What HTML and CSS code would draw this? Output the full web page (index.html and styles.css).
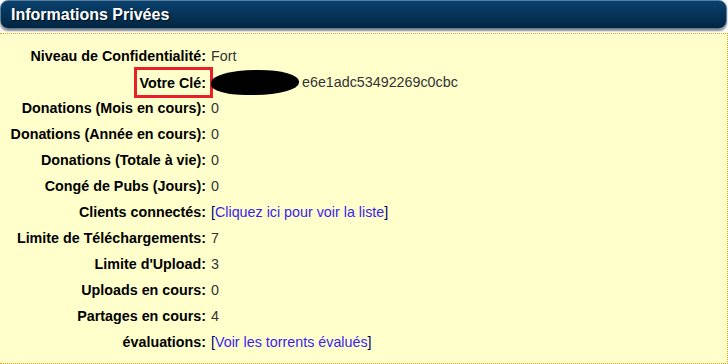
FILE: index.html
```html
<!DOCTYPE html>
<html lang="fr">

<head>
    <meta charset="UTF-8">
    <meta name="viewport" content="width=device-width, initial-scale=1.0">
    <title>Informations Privées</title>
    <link rel="stylesheet" href="styles.css">
</head>

<body>
    <div class="head">
        <h2>Informations Privées</h2>
    </div>
    <div class="panel">
        <div class="info">
            <span class="lbl">Niveau de Confidentialité:</span>
            <span class="val">Fort</span>

            <span class="lbl"><span class="mark">Votre Clé:</span></span>
            <span class="val key"><span class="blot"></span>e6e1adc53492269c0cbc</span>

            <span class="lbl">Donations (Mois en cours):</span>
            <span class="val">0</span>

            <span class="lbl">Donations (Année en cours):</span>
            <span class="val">0</span>

            <span class="lbl">Donations (Totale à vie):</span>
            <span class="val">0</span>

            <span class="lbl">Congé de Pubs (Jours):</span>
            <span class="val">0</span>

            <span class="lbl">Clients connectés:</span>
            <span class="val"><span class="br">[</span><a href="#">Cliquez ici pour voir la liste</a><span class="br">]</span></span>

            <span class="lbl">Limite de Téléchargements:</span>
            <span class="val">7</span>

            <span class="lbl">Limite d'Upload:</span>
            <span class="val">3</span>

            <span class="lbl">Uploads en cours:</span>
            <span class="val">0</span>

            <span class="lbl">Partages en cours:</span>
            <span class="val">4</span>

            <span class="lbl">évaluations:</span>
            <span class="val"><span class="br">[</span><a href="#">Voir les torrents évalués</a><span class="br">]</span></span>
        </div>
    </div>
</body>

</html>
```

FILE: styles.css
```css
body {
    margin: 0;
    background: #ffffff;
    font-family: "Liberation Sans", Arial, sans-serif;
    font-size: 14.3px;
}

.head {
    height: 27px;
    margin-right: 1px;
    border: 1px solid #5b7e9c;
    border-radius: 8px;
    background: linear-gradient(#0a426e, #022541);
    box-shadow: 0 2px 2px #8a8a8a;
}

h2 {
    margin: 0;
    padding-left: 10px;
    color: #ffffff;
    font-size: 16px;
    line-height: 27px;
    text-shadow: 1px 1px 1px #001020;
}

.panel {
    margin-top: 4px;
    height: 320px;
    padding: 9px 0 0 4px;
    background: #ffffcc;
    border-top: 1px dotted #f39c12;
    border-right: 1px dotted #f39c12;
    border-bottom: 1px dotted #f39c12;
}

.info {
    display: grid;
    grid-template-columns: 202px auto;
    grid-auto-rows: 26px;
    column-gap: 5px;
    align-items: center;
}

.lbl {
    text-align: right;
    font-weight: bold;
    color: #000000;
}

.val {
    color: #333333;
}

.mark {
    display: inline-block;
    border: 3px solid #e8202a;
    padding: 5px 4px 4px 3px;
    margin-right: -7px;
}

.key {
    display: flex;
    align-items: center;
}

.blot {
    width: 88px;
    height: 25px;
    margin-right: 3px;
    background: #000000;
    border-radius: 50% 45% 50% 40%;
}

.br {
    color: #000066;
}

a {
    color: #3a1cf0;
    text-decoration: none;
}
```
